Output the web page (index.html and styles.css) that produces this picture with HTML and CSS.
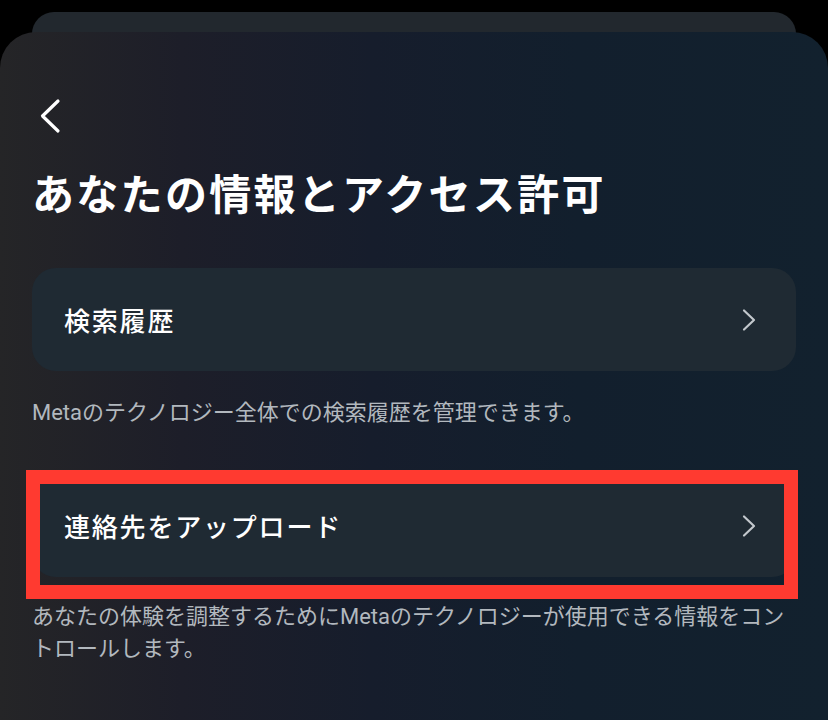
FILE: index.html
```html
<!DOCTYPE html>
<html lang="ja">
<head>
<meta charset="utf-8">
<title>あなたの情報とアクセス許可</title>
<link rel="stylesheet" href="styles.css">
</head>
<body>
<div class="screen">
  <div class="back-sheet"></div>
  <main class="sheet">
    <button class="back" aria-label="戻る">
      <svg width="24" height="36" viewBox="0 0 24 36"><polyline points="20,3 4.5,18 20,33" fill="none" stroke="#ffffff" stroke-width="3.2" stroke-linecap="round" stroke-linejoin="round"/></svg>
    </button>
    <h1 class="title">あなたの情報とアクセス許可</h1>

    <section class="group">
      <a class="row" href="#">
        <span class="row-label">検索履歴</span>
        <svg class="chev" width="16" height="24" viewBox="0 0 16 24"><polyline points="3,2.5 13,12 3,21.5" fill="none" stroke="#c3c8cd" stroke-width="2.2" stroke-linecap="round" stroke-linejoin="round"/></svg>
      </a>
      <p class="desc">Metaのテクノロジー全体での検索履歴を管理できます。</p>
    </section>

    <section class="group group-second">
      <div class="row-wrap">
        <a class="row" href="#">
          <span class="row-label">連絡先をアップロード</span>
          <svg class="chev" width="16" height="24" viewBox="0 0 16 24"><polyline points="3,2.5 13,12 3,21.5" fill="none" stroke="#c3c8cd" stroke-width="2.2" stroke-linecap="round" stroke-linejoin="round"/></svg>
        </a>
        <div class="highlight"></div>
      </div>
      <p class="desc desc-second">あなたの体験を調整するためにMetaのテクノロジーが使用できる情報をコントロールします。</p>
    </section>
  </main>
</div>
</body>
</html>
```

FILE: styles.css
```css
* {
  box-sizing: border-box;
}

html, body {
  margin: 0;
  padding: 0;
  background: #000000;
  height: 100%;
  overflow: hidden;
}

body {
  font-family: "Roboto", "Noto Sans CJK JP", sans-serif;
  color: #ffffff;
}

.screen {
  padding-top: 12px;
  height: 720px;
  overflow: hidden;
}

.back-sheet {
  margin: 0 32px;
  height: 40px;
  border-radius: 22px 22px 0 0;
  background: #22282e;
}

.sheet {
  margin-top: -20px;
  height: 688px;
  border-radius: 36px 36px 0 0;
  background: linear-gradient(90deg, #252527 0%, #1d1e29 22%, #161d2c 45%, #121f2d 70%, #12212e 100%);
  padding: 66px 32px 0 32px;
  position: relative;
}

.back {
  display: block;
  margin: 0 0 0 6px;
  padding: 0;
  border: 0;
  background: none;
  width: 24px;
  height: 36px;
  cursor: pointer;
}

.back svg {
  display: block;
}

.title {
  margin: 32px 0 0 0;
  font-family: "Noto Sans CJK JP", sans-serif;
  font-size: 42px;
  line-height: 52px;
  font-weight: 700;
  letter-spacing: 2.3px;
  color: #ffffff;
}

.group {
  margin-top: 50px;
}

.group-second {
  margin-top: 45px;
}

.row-wrap {
  position: relative;
}

.row {
  display: flex;
  align-items: center;
  justify-content: space-between;
  height: 103px;
  padding: 0 39px 0 32px;
  border-radius: 24px;
  background: #1f2a33;
  text-decoration: none;
  color: #ffffff;
}

.row-label {
  font-family: "Noto Sans CJK JP", sans-serif;
  font-size: 26px;
  font-weight: 500;
  letter-spacing: 1.8px;
}

.chev {
  display: block;
}

.desc {
  margin: 26px 0 0 0;
  font-family: "Roboto", "Noto Sans CJK JP", sans-serif;
  font-size: 22px;
  line-height: 32px;
  color: #b2b8be;
}

.desc-second {
  margin-top: 24px;
}

.highlight {
  position: absolute;
  left: -6px;
  top: -4px;
  width: 772px;
  height: 129px;
  border: 14px solid #ff3a30;
  pointer-events: none;
}
```
